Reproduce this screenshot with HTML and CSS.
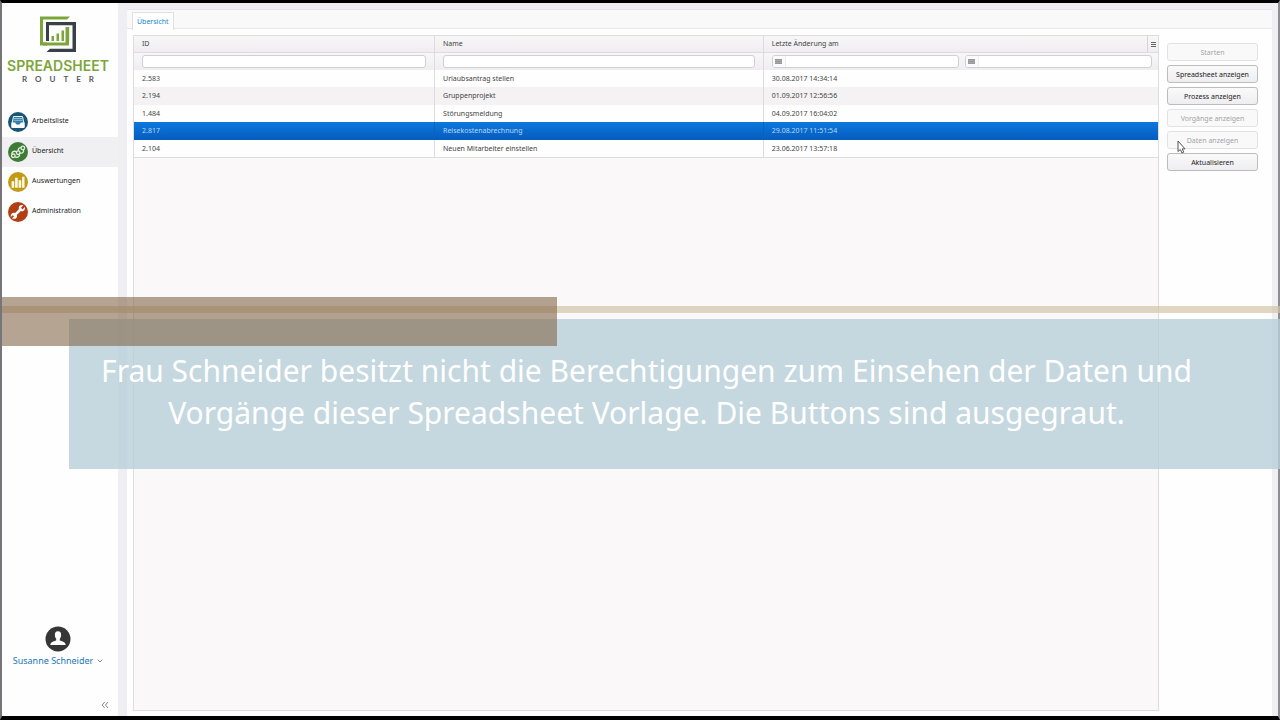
FILE: index.html
```html
<!DOCTYPE html>
<html lang="de">
<head>
<meta charset="utf-8">
<meta name="viewport" content="width=device-width, initial-scale=1">
<title>Spreadsheet Router – Übersicht</title>
<link rel="stylesheet" href="styles.css">
</head>
<body>
<div class="app">
  <aside class="sidebar">
    <div class="logo">
      <svg class="logo-mark" viewBox="0 0 38 38" width="38" height="38" aria-hidden="true">
        <path d="M31 1.500L28 4.500H4V27.500H8V30.500H1V1.500Z" fill="#7da63a"/>
        <path d="M26 27.500H4V30.500H30V12H26.500V27.500Z" fill="#7da63a"/>
        <path d="M7 7H37V37H7.500L11 33.800H33.500V10.200H10V26H7Z" fill="#3a4048"/>
        <path d="M12.500 21h2.500v5h-2.500zM17.500 18.500h2.500v7.500h-2.500zM22.500 15.500h2.500v10.500h-2.500zM27.500 12h2.700v14h-2.700z" fill="#7da63a"/>
      </svg>
      <div class="logo-name">SPREADSHEET</div>
      <div class="logo-sub">ROUTER</div>
    </div>
    <nav class="nav">
      <a class="nav-item" href="#">
        <svg class="nav-icon" viewBox="0 0 20 20" aria-hidden="true"><circle cx="10" cy="10" r="10" fill="#1b5572"/><path d="M5.500 4.500h9l1.500 7v4H4v-4z" fill="#2f7fa6" stroke="#e9f5fa" stroke-width="1"/><path d="M6 6.500h8M5.700 8.300h8.600" stroke="#a9cfdf" stroke-width=".8"/><path d="M3.500 10.500h3.800c.3 3 5.100 3 5.400 0h3.800v5h-13z" fill="#fff"/></svg>
        <span>Arbeitsliste</span>
      </a>
      <a class="nav-item active" href="#" aria-current="page">
        <svg class="nav-icon" viewBox="0 0 20 20" aria-hidden="true"><circle cx="10" cy="10" r="10" fill="#3f7b35"/><g fill="none" stroke="#e4f0df" stroke-width="1.300"><circle cx="5.300" cy="13.800" r="1.800"/><circle cx="10.200" cy="10.700" r="1.800"/><circle cx="14.800" cy="6" r="1.800"/><path d="M4 12.200C3.500 9.500 6 8.700 8.300 9.700M7 14.900c3 1 4.800-.4 4.500-2.600M13 5.600c-2.300 0-3 1.500-2.700 3.300M12 11c3 .3 4-1 3.500-3.200"/></g></svg>
        <span>Übersicht</span>
      </a>
      <a class="nav-item" href="#">
        <svg class="nav-icon" viewBox="0 0 20 20" aria-hidden="true"><circle cx="10" cy="10" r="10" fill="#c29a18"/><path d="M3.600 9.200h2.600v6.600H3.600zM7.100 5.800h2.600v10H7.100zM10.600 8.200h2.600v7.600h-2.600zM14.100 4.800h2.400v11h-2.400z" fill="#fffbe8"/></svg>
        <span>Auswertungen</span>
      </a>
      <a class="nav-item" href="#">
        <svg class="nav-icon" viewBox="0 0 20 20" aria-hidden="true"><circle cx="10" cy="10" r="10" fill="#b23f14"/><path d="M5.800 14.200L13.500 6.500" stroke="#fff" stroke-width="2.600"/><path d="M15.300 3.300l-2.200 2.300.3 1.300 1.300.3 2.200-2.200c.7 2-1 4.800-3.700 4.200l-2.400-2.400c-.6-2.600 2.100-4.600 4.500-3.500z" fill="#fff"/><path d="M4 16.300l2.200-2-.2-1-1-.4-2.200 2.100c-.4-2.400 1.400-4.700 4-4l2.200 2.200c.7 2.700-2.200 4.700-5 3.100z" fill="#fff"/></svg>
        <span>Administration</span>
      </a>
    </nav>
    <div class="user">
      <svg class="avatar" viewBox="0 0 26 26" aria-hidden="true"><circle cx="13" cy="13" r="12.500" fill="#363637"/><path d="M13 5.200c2.600 0 3.300 1.900 3.100 4-.1 1.800-.8 2.900-1.300 3.600v1.700c2.800 1 5.700 1.500 5.900 4.600H5.300c.2-3.100 3.100-3.600 5.900-4.600v-1.700c-.5-.7-1.200-1.800-1.300-3.600-.2-2.100.5-4 3.100-4z" fill="#fff"/></svg>
      <button class="user-menu" type="button">Susanne Schneider
        <svg width="6" height="4" viewBox="0 0 6 4" aria-hidden="true"><path d="M.7.700L3 3 5.300.700" fill="none" stroke="#7795a8"/></svg>
      </button>
    </div>
    <button class="collapse" type="button" aria-label="Menü einklappen">
      <svg width="8" height="8" viewBox="0 0 8 8" aria-hidden="true"><path d="M3.700 1L1.200 4l2.500 3M7 1L4.500 4 7 7" fill="none" stroke="#888"/></svg>
    </button>
  </aside>

  <main class="panel">
    <div class="tabs" role="tablist">
      <button class="tab" type="button" role="tab" aria-selected="true">Übersicht</button>
    </div>
    <div class="content">
      <div class="grid">
        <table class="table">
          <colgroup><col class="col-id"><col class="col-name"><col></colgroup>
          <thead>
            <tr class="head"><th scope="col">ID</th><th scope="col">Name</th>
              <th scope="col"><div class="last-head"><span>Letzte Änderung am</span><button class="columns" type="button" aria-label="Spalten"><svg width="5" height="5" viewBox="0 0 5 5" aria-hidden="true"><path d="M0 .5h5M0 2.500h5M0 4.500h5" stroke="#666"/></svg></button></div></th></tr>
            <tr class="filters">
              <td><input class="filter" type="text" aria-label="ID filtern"></td>
              <td><input class="filter" type="text" aria-label="Name filtern"></td>
              <td><div class="dates">
                <div class="date"><button type="button" aria-label="Von-Datum wählen"><svg width="7" height="5" viewBox="0 0 7 5" aria-hidden="true"><path d="M0 0h7v5H0z" fill="#999"/><path d="M0 1.500h7M0 3.500h7" stroke="#b4b4b4" stroke-width=".5"/></svg></button><input type="text" aria-label="Von"></div>
                <div class="date"><button type="button" aria-label="Bis-Datum wählen"><svg width="7" height="5" viewBox="0 0 7 5" aria-hidden="true"><path d="M0 0h7v5H0z" fill="#999"/><path d="M0 1.500h7M0 3.500h7" stroke="#b4b4b4" stroke-width=".5"/></svg></button><input type="text" aria-label="Bis"></div>
              </div></td>
            </tr>
          </thead>
          <tbody>
            <tr><td>2.583</td><td>Urlaubsantrag stellen</td><td>30.08.2017 14:34:14</td></tr>
            <tr><td>2.194</td><td>Gruppenprojekt</td><td>01.09.2017 12:56:56</td></tr>
            <tr><td>1.484</td><td>Störungsmeldung</td><td>04.09.2017 16:04:02</td></tr>
            <tr class="selected"><td>2.817</td><td>Reisekostenabrechnung</td><td>29.08.2017 11:51:54</td></tr>
            <tr><td>2.104</td><td>Neuen Mitarbeiter einstellen</td><td>23.06.2017 13:57:18</td></tr>
          </tbody>
        </table>
      </div>
      <div class="actions">
        <button type="button" disabled>Starten</button>
        <button type="button">Spreadsheet anzeigen</button>
        <button type="button">Prozess anzeigen</button>
        <button type="button" disabled>Vorgänge anzeigen</button>
        <button type="button" disabled>Daten anzeigen</button>
        <button type="button">Aktualisieren</button>
      </div>
    </div>
  </main>

  <div class="caption-line"></div>
  <p class="caption">Frau Schneider besitzt nicht die Berechtigungen zum Einsehen der Daten und Vorgänge dieser Spreadsheet Vorlage. Die Buttons sind ausgegraut.</p>
  <div class="caption-accent"></div>
  <svg class="pointer" width="9" height="14" viewBox="0 0 9 14" aria-hidden="true"><path d="M1 1v10.500l2.300-2 1.700 3.500 1.700-.8L5.200 8.900H8z" fill="#fff" stroke="#555"/></svg>
</div>
</body>
</html>
```

FILE: styles.css
```css
* { box-sizing: border-box; }

body {
  margin: 0;
  background: #efeef2;
  color: #444;
  font-family: "Noto Sans", "Open Sans", sans-serif;
  font-size: 7px;
}

button, input { font: inherit; color: inherit; margin: 0; padding: 0; }
svg { display: block; flex: none; }

.app {
  position: relative;
  display: flex;
  min-height: 100vh;
  border-style: solid;
  border-width: 3px 2px 4px;
  border-color: #000 #8f8d92 #000 #77757a;
}

/* Sidebar */
.sidebar {
  display: flex;
  flex-direction: column;
  flex: none;
  width: 116px;
  background: #fefefe;
}

.logo {
  display: flex;
  flex-direction: column;
  align-items: center;
  padding: 12px 4px 0 0;
  height: 104px;
}
.logo-name {
  margin-top: 4px;
  font: 600 14px/18px Inter, sans-serif;
  color: #7da63a;
}
.logo-sub {
  padding-left: 8px;
  font: bold 8px/8px Lato, sans-serif;
  letter-spacing: 8px;
  color: #555a60;
}

.nav-item {
  display: flex;
  align-items: center;
  gap: 4px;
  height: 30px;
  padding-left: 6px;
  color: #222;
  line-height: 10px;
  text-decoration: none;
}
.nav-item.active { background: #f0eff1; }
.nav-item span { padding-bottom: 2px; }
.nav-icon { width: 20px; height: 20px; }

.user {
  display: flex;
  flex-direction: column;
  align-items: center;
  gap: 1px;
  margin-top: auto;
  padding-right: 4px;
}
.avatar { width: 26px; height: 26px; }
.user-menu {
  display: flex;
  align-items: center;
  gap: 4px;
  border: 0;
  background: none;
  color: #2077b8;
  font-size: 9px;
  line-height: 16px;
}
.collapse {
  align-self: flex-end;
  margin: 32px 9px 7px;
  border: 0;
  background: none;
}

/* Main panel */
.panel {
  display: flex;
  flex-direction: column;
  flex: 1;
  min-width: 0;
  margin: 6px 6px 0 9px;
  background: #fefefe;
}
.tabs {
  display: flex;
  height: 20px;
  padding: 2px 5px 0;
  background: #faf9fa;
  border: solid #e6e5e8;
  border-width: 1px 0;
}
.tab {
  height: 18px;
  margin-bottom: -1px;
  padding: 0 4px;
  border: 1px solid #e0dfe2;
  border-bottom: 0;
  background: #fefefe;
  color: #2084cc;
}
.content {
  display: flex;
  flex: 1;
  gap: 8px;
  padding: 6px 14px 5px 6px;
}

/* Table */
.grid {
  flex: 1;
  min-width: 0;
  border: 1px solid #dddcdf;
  background: #faf8f9;
}
.table {
  width: 100%;
  table-layout: fixed;
  border-spacing: 0;
  border-bottom: 1px solid #dddcdf;
  line-height: 16px;
}
.col-id { width: 29.4%; }
.col-name { width: 32.1%; }
.table th, .table td {
  height: 17px;
  padding: 0 8px;
  text-align: left;
  font-weight: normal;
  border-right: 1px solid #dcdbde;
}
.table th:last-child, .table td:last-child { border-right: 0; }
.table .head th {
  border-bottom: 1px solid #dddcdf;
  background: linear-gradient(#f8f7f8, #efedf0);
}
.table .head th:last-child { padding-right: 0; }
.last-head { display: flex; justify-content: space-between; }
.columns {
  display: grid;
  place-items: center;
  width: 11px;
  border: 0;
  border-left: 1px solid #d4d3d6;
  background: none;
}
.filters td {
  background: linear-gradient(#f8f7f8, #efedf0);
}
.table .filters td:last-child { padding-right: 6px; }
.filter, .date {
  display: block;
  width: 100%;
  height: 13px;
  border: 1px solid #d0cfd2;
  border-radius: 3px;
  background: #fff;
}
.dates { display: flex; gap: 6px; }
.date { display: flex; flex: 1; min-width: 0; overflow: hidden; }
.date button {
  display: grid;
  place-items: center;
  flex: none;
  width: 13px;
  border: 0;
  border-right: 1px solid #eee;
  background: #fbfbfb;
}
.date input { flex: 1; min-width: 0; border: 0; background: none; }

.table tbody td { background: #fefefe; }
.table tbody tr:nth-child(even) td { height: 18px; background: #f4f2f3; }
.table tbody .selected:nth-child(even) td {
  background: linear-gradient(#0d78dc, #055cbe);
  border-color: #0b62be;
  color: #b8d7f7;
}

/* Action buttons */
.actions {
  display: flex;
  flex-direction: column;
  flex: none;
  gap: 4px;
  width: 91px;
  padding-top: 8px;
}
.actions button {
  height: 18px;
  border: 1px solid #bcbbbf;
  border-radius: 3px;
  background: linear-gradient(#fafafa, #eeedf0);
  color: #222;
}
.actions button:disabled {
  border-color: #e2e1e4;
  background: #faf9fa;
  color: #a3a2a5;
}

/* Caption laid over the application */
.caption {
  position: absolute;
  top: 316px;
  left: 67px;
  right: -2px;
  min-height: 150px;
  margin: 0;
  padding: 31px 80px 35px 24px;
  background: rgba(184, 206, 216, .8);
  color: #fff;
  font-size: 30px;
  line-height: 42px;
  text-align: center;
}
.caption-line {
  position: absolute;
  top: 303px;
  left: 0;
  right: -2px;
  height: 7px;
  background: rgba(211, 196, 168, .7);
}
.caption-accent {
  position: absolute;
  top: 294px;
  left: 0;
  width: 555px;
  height: 49px;
  background: rgba(132, 103, 74, .6);
}
.pointer {
  position: absolute;
  top: 137px;
  right: 92px;
}
```
